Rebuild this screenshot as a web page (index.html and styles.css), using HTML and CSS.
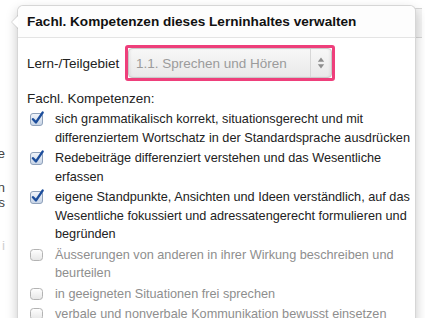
FILE: index.html
```html
<!DOCTYPE html>
<html lang="de">
<head>
<meta charset="utf-8">
<title>Fachl. Kompetenzen</title>
<link rel="stylesheet" href="styles.css">
</head>
<body>
<div class="page">
  <div class="bg-text">
    <div class="bg-line first"><span>Ziele</span></div>
    <div class="bg-line second"><span>Lernen</span></div>
    <div class="bg-line"><span>Texts</span></div>
    <div class="bg-line faint"><span>Notiz i</span></div>
  </div>
  <div class="bg-btn"></div>
</div>

<div class="popover">
  <div class="arrow"></div>
  <h3 class="popover-title">Fachl. Kompetenzen dieses Lerninhaltes verwalten</h3>
  <div class="popover-content">
    <div class="field">
      <span class="field-label">Lern-/Teilgebiet</span>
      <div class="highlight">
        <div class="select">
          <span class="select-value">1.1. Sprechen und Hören</span>
          <span class="select-arrows">
            <svg width="8" height="12" viewBox="0 0 8 12"><path d="M4 0.5 L7.2 4.8 H0.8 Z" fill="#8e8e8e"/><path d="M4 11.5 L7.2 7.2 H0.8 Z" fill="#8e8e8e"/></svg>
          </span>
        </div>
      </div>
    </div>
    <div class="section-label">Fachl. Kompetenzen:</div>
    <ul class="checks">
      <li class="check checked">
        <svg class="box" width="15" height="15" viewBox="0 0 15 15"><defs><linearGradient id="cg" x1="0" y1="0" x2="0" y2="1"><stop offset="0" stop-color="#f1f5fb"/><stop offset="1" stop-color="#c6d3e5"/></linearGradient></defs><rect x="0.5" y="2.5" width="12" height="12" rx="2.5" fill="url(#cg)" stroke="#8fa1ba"/><path d="M3 8.2 L6 11.4 L12.6 1.6" fill="none" stroke="#1c4d9b" stroke-width="2.4" stroke-linecap="round" stroke-linejoin="round"/></svg>
        <span class="check-text">sich grammatikalisch korrekt, situationsgerecht und mit differenziertem Wortschatz in der Standardsprache ausdrücken</span>
      </li>
      <li class="check checked">
        <svg class="box" width="15" height="15" viewBox="0 0 15 15"><rect x="0.5" y="2.5" width="12" height="12" rx="2.5" fill="url(#cg)" stroke="#8fa1ba"/><path d="M3 8.2 L6 11.4 L12.6 1.6" fill="none" stroke="#1c4d9b" stroke-width="2.4" stroke-linecap="round" stroke-linejoin="round"/></svg>
        <span class="check-text">Redebeiträge differenziert verstehen und das Wesentliche erfassen</span>
      </li>
      <li class="check checked">
        <svg class="box" width="15" height="15" viewBox="0 0 15 15"><rect x="0.5" y="2.5" width="12" height="12" rx="2.5" fill="url(#cg)" stroke="#8fa1ba"/><path d="M3 8.2 L6 11.4 L12.6 1.6" fill="none" stroke="#1c4d9b" stroke-width="2.4" stroke-linecap="round" stroke-linejoin="round"/></svg>
        <span class="check-text">eigene Standpunkte, Ansichten und Ideen verständlich, auf das Wesentliche fokussiert und adressatengerecht formulieren und begründen</span>
      </li>
      <li class="check">
        <svg class="box" width="15" height="15" viewBox="0 0 15 15"><defs><linearGradient id="ug" x1="0" y1="0" x2="0" y2="1"><stop offset="0" stop-color="#ffffff"/><stop offset="1" stop-color="#e6e6e6"/></linearGradient></defs><rect x="0.5" y="2.5" width="12" height="11" rx="3" fill="url(#ug)" stroke="#b3b3b3"/></svg>
        <span class="check-text">Äusserungen von anderen in ihrer Wirkung beschreiben und beurteilen</span>
      </li>
      <li class="check">
        <svg class="box" width="15" height="15" viewBox="0 0 15 15"><rect x="0.5" y="2.5" width="12" height="11" rx="3" fill="url(#ug)" stroke="#b3b3b3"/></svg>
        <span class="check-text">in geeigneten Situationen frei sprechen</span>
      </li>
      <li class="check">
        <svg class="box" width="15" height="15" viewBox="0 0 15 15"><rect x="0.5" y="2.5" width="12" height="11" rx="3" fill="url(#ug)" stroke="#b3b3b3"/></svg>
        <span class="check-text">verbale und nonverbale Kommunikation bewusst einsetzen</span>
      </li>
    </ul>
  </div>
</div>
</body>
</html>
```

FILE: styles.css
```css
html, body {
  margin: 0;
  padding: 0;
  overflow: hidden;
  background: #ffffff;
}

body {
  font-family: "Liberation Sans", Arial, sans-serif;
  font-size: 13.5px;
  color: #333333;
  width: 425px;
  height: 318px;
  position: relative;
}

.page {
  height: 318px;
  display: flex;
  justify-content: space-between;
}

.bg-text {
  width: 5px;
  overflow: hidden;
  padding-top: 146px;
  display: flex;
  flex-direction: column;
}

.bg-line {
  display: flex;
  justify-content: flex-end;
  white-space: nowrap;
  line-height: 15px;
  font-size: 13.5px;
  color: #444444;
}

.bg-line.second {
  margin-top: 19px;
}

.bg-line.faint {
  margin-top: 28px;
  color: #cfcfcf;
}

.bg-btn {
  width: 8px;
  height: 28px;
  margin-top: 8px;
  margin-right: 3px;
  border: 1px solid #d6d6d6;
  border-right: none;
  border-radius: 3px 0 0 3px;
  background: #f4f4f4;
}

.popover {
  position: absolute;
  top: 5px;
  left: 17px;
  width: 397px;
  height: 340px;
  background: #ffffff;
  border: 1px solid rgba(0, 0, 0, 0.16);
  border-radius: 6px;
  box-shadow: 0 5px 12px rgba(0, 0, 0, 0.22);
}

.arrow {
  position: absolute;
  top: 9px;
  left: -7px;
  width: 0;
  height: 0;
  border-top: 7px solid transparent;
  border-bottom: 7px solid transparent;
  border-right: 7px solid rgba(0, 0, 0, 0.12);
}

.arrow::after {
  content: "";
  position: absolute;
  top: -6px;
  left: 1px;
  border-top: 6px solid transparent;
  border-bottom: 6px solid transparent;
  border-right: 6px solid #ffffff;
}

.popover-title {
  margin: 0;
  height: 31px;
  line-height: 32px;
  padding: 0 9px;
  font-size: 13.6px;
  font-weight: 700;
  color: #111111;
  background: #fdfdfd;
  border-bottom: 1px solid #e4e4e4;
  border-radius: 6px 6px 0 0;
}

.popover-content {
  padding: 7px 3px 0 9px;
}

.field {
  display: flex;
  align-items: center;
}

.field-label {
  width: 98px;
  color: #222222;
  white-space: nowrap;
}

.highlight {
  border: 3px solid #ee3f7b;
  border-radius: 3px;
  width: 204px;
}

.select {
  height: 28px;
  display: flex;
  align-items: center;
  border: 1px solid #c9c9c9;
  border-radius: 4px;
  background: linear-gradient(#f7f7f7, #e9e9e9);
  box-shadow: inset 2px 0 2px rgba(0, 0, 0, 0.04), inset -2px 0 2px rgba(0, 0, 0, 0.04);
}

.select-value {
  flex: 1;
  padding-left: 7px;
  font-size: 13.5px;
  color: #9b9b9b;
  white-space: nowrap;
}

.select-arrows {
  width: 20px;
  height: 100%;
  display: flex;
  align-items: center;
  justify-content: center;
  border-left: 1px solid #d7d7d7;
}

.section-label {
  margin-top: 9px;
  line-height: 18px;
  color: #222222;
}

.checks {
  list-style: none;
  margin: 2px 0 0 0;
  padding: 0;
}

.check {
  display: flex;
  align-items: flex-start;
  margin-bottom: 2px;
  line-height: 18.5px;
  font-size: 12.7px;
  color: #222222;
}

.check .box {
  flex: none;
  margin: 1px 10px 0 3px;
}

.check:not(.checked) {
  color: #8e8e8e;
}

.check-text {
  flex: 1;
}
```
